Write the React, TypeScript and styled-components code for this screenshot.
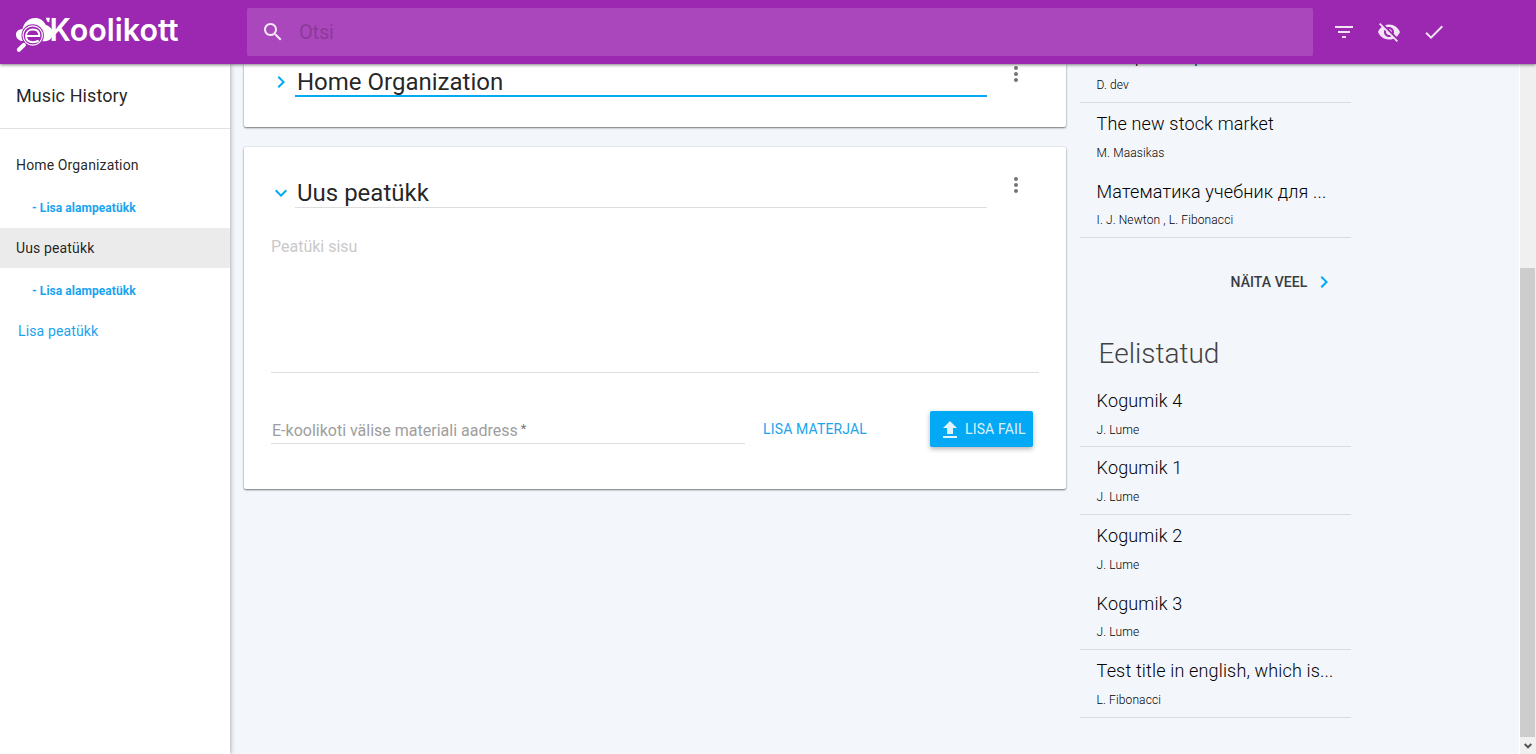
import React from "react";
import styled, { createGlobalStyle } from "styled-components";

const Global = createGlobalStyle`
  *, *::before, *::after { box-sizing: border-box; }
  html, body, #root { height: 100%; }
  body { margin: 0; background: #f3f6fb; font-family: Roboto, "Liberation Sans", sans-serif; color: rgba(0,0,0,.87); overflow: hidden; }
  h1, h2, h3, p { margin: 0; font-weight: 400; }
  button { font: inherit; border: 0; background: none; padding: 0; }
  svg { display: block; flex: none; }
`;

const Page = styled.div`
  height: 754px;
  display: flex;
  flex-direction: column;
`;
const Header = styled.header`
  height: 64px;
  flex: none;
  display: flex;
  align-items: center;
  background: #9c27b0;
  position: relative;
  z-index: 2;
  box-shadow: 0 1px 3px rgba(0,0,0,.5);
`;
const Brand = styled.div`
  width: 247px;
  flex: none;
`;
const SearchBar = styled.label`
  width: 1066px;
  height: 48px;
  display: flex;
  align-items: center;
  padding-left: 13.5px;
  gap: 14.5px;
  border-radius: 2px;
  background: #ab47bc;
`;
const SearchText = styled.span`
  font-size: 20px;
  line-height: 24px;
  letter-spacing: -.2px;
  color: #8b3a9a;
`;
const Actions = styled.div`
  display: flex;
  align-items: center;
  gap: 21.3px;
  padding-left: 18.5px;
`;
const Body = styled.div`
  flex: 1;
  min-height: 0;
  display: flex;
`;
const Sidebar = styled.nav`
  width: 230px;
  flex: none;
  background: #fff;
  box-shadow: 0 0 5px rgba(0,0,0,.4);
  position: relative;
  z-index: 1;
`;
const SidebarTitle = styled.h2`
  height: 65px;
  padding: 0 16px;
  border-bottom: 1px solid #e1e1e1;
  font-size: 18px;
  line-height: 63px;
  letter-spacing: .08px;
  margin-bottom: 16px;
`;
const Chapter = styled.div<{ $active?: boolean }>`
  height: 40px;
  padding: 0 16px;
  font-size: 14px;
  line-height: 40px;
  letter-spacing: .14px;
  background: ${(p) => (p.$active ? "#ebebeb" : "transparent")};
`;
const AddSub = styled.div`
  height: 43px;
  padding-left: 32px;
  font-size: 12px;
  font-weight: 700;
  line-height: 47px;
  letter-spacing: .06px;
  color: #1aa3ee;
`;
const AddChapter = styled.div`
  padding-left: 18px;
  font-size: 14px;
  line-height: 40px;
  letter-spacing: .14px;
  color: #1aa3ee;
`;
const Main = styled.main`
  width: 850px;
  flex: none;
  padding: 0 14px;
`;
const Card = styled.section<{ $height: number; $flat?: boolean }>`
  height: ${(p) => p.$height}px;
  padding: ${(p) => (p.$flat ? "0" : "28px")} 27px 0;
  margin-bottom: 20px;
  border-radius: ${(p) => (p.$flat ? "0 0 2px 2px" : "2px")};
  background: #fff;
  box-shadow: 0 1px 2px rgba(0,0,0,.5), 0 0 2px rgba(0,0,0,.14);
`;
const ChapterHead = styled.div`
  display: flex;
  align-items: flex-start;
`;
const Toggle = styled.div`
  width: 26px;
  margin-left: -2px;
  padding-top: 6px;
`;
const ChapterTitle = styled.h1<{ $focus?: boolean }>`
  width: 692px;
  height: 33px;
  padding: 4px 2px 0;
  font-size: 24px;
  line-height: 28px;
  border-bottom: ${(p) => (p.$focus ? "2px solid #03a9f4" : "1px solid #dedede")};
`;
const Kebab = styled.div`
  margin-top: -2px;
  padding-left: 16.5px;
`;
const Editor = styled.div`
  height: 143px;
  margin-top: 22px;
  padding-top: 6px;
  border-bottom: 1px solid #dedede;
  font-size: 16px;
  line-height: 22px;
  color: #c9c9c9;
`;
const MaterialRow = styled.div`
  display: flex;
  align-items: center;
  margin-top: 38px;
  height: 36px;
`;
const UrlField = styled.div`
  width: 474px;
  height: 30px;
  margin-top: -1px;
  padding: 4px 1px 0;
  border-bottom: 1px solid #dedede;
  font-size: 16px;
  line-height: 26px;
  color: #9e9e9e;
`;
const Star = styled.sup`
  font-size: 13px;
  line-height: 0;
  vertical-align: 3px;
  margin-left: 3px;
  color: #777;
`;
const FlatButton = styled.button`
  margin-left: 18px;
  font-size: 14px;
  line-height: 36px;
  color: #1aa3ee;
  letter-spacing: .14px;
  width: 104px;
  white-space: nowrap;
`;
const RaisedButton = styled.button`
  width: 103px;
  height: 36px;
  margin-left: 63px;
  padding-left: 7.5px;
  display: flex;
  align-items: center;
  gap: 3.5px;
  border-radius: 2px;
  background: #03a9f4;
  color: rgba(255,255,255,.87);
  font-size: 14px;
  letter-spacing: .14px;
  white-space: nowrap;
  box-shadow: 0 2px 5px rgba(0,0,0,.3);

  svg { margin-top: 1px; }
`;
const Aside = styled.aside`
  width: 271px;
  flex: none;
`;
const Item = styled.div<{ $h: number; $line?: boolean; $top: number }>`
  height: ${(p) => p.$h}px;
  padding: ${(p) => p.$top}px 0 0 16.6px;
  border-bottom: ${(p) => (p.$line ? "1px solid #d9dce1" : "0")};
  color: #000;
`;
const ItemTitle = styled.h3`
  font-size: 18px;
  font-weight: 300;
  line-height: 28px;
  letter-spacing: .16px;
  white-space: nowrap;
`;
const ItemAuthor = styled.p<{ $gap?: number }>`
  font-size: 12px;
  font-weight: 300;
  line-height: 16px;
  margin-top: ${(p) => p.$gap ?? 7}px;
  letter-spacing: .12px;
`;
const ScrolledItem = styled.div`
  height: 68px;
  margin-top: -29px;
  padding: 7px 0 0 16.6px;
  border-bottom: 1px solid #d9dce1;
  color: #000;
`;
const More = styled.div`
  height: 90px;
  display: flex;
  align-items: center;
  justify-content: flex-end;
  gap: 4px;
  padding: 0 15.5px 2px 0;
  font-size: 14px;
  font-weight: 500;
  line-height: 18px;
  letter-spacing: .08px;
  color: #3a3c3f;
`;
const AsideHeading = styled.h2`
  height: 52px;
  padding-left: 18.5px;
  font-size: 28px;
  font-weight: 300;
  line-height: 52px;
  color: #424242;
`;
const Spacer = styled.div`
  flex: 1;
`;
const ScrollTrack = styled.div`
  width: 17px;
  border-left: 1px solid #fff;
  background: #f0f0f0;
  display: flex;
  flex-direction: column;
  justify-content: flex-end;
`;
const ScrollThumb = styled.div`
  height: 469px;
  margin-right: 1px;
  background: #cdcdcd;
`;
const ScrollButton = styled.div`
  height: 17px;
  display: flex;
  align-items: center;
  justify-content: center;
`;

const paths = {
  search: "M15.5 14h-.79l-.28-.27C15.41 12.59 16 11.11 16 9.5 16 5.91 13.09 3 9.5 3S3 5.91 3 9.5 5.91 16 9.5 16c1.61 0 3.09-.59 4.23-1.57l.27.28v.79l5 4.99L20.49 19l-4.99-5zm-6 0C7.01 14 5 11.99 5 9.5S7.01 5 9.5 5 14 7.01 14 9.5 11.99 14 9.5 14z",
  filter: "M10 18h4v-2h-4v2zM3 6v2h18V6H3zm3 7h12v-2H6v2z",
  hidden: "M12 7c2.76 0 5 2.24 5 5 0 .65-.13 1.26-.36 1.83l2.92 2.92c1.51-1.26 2.7-2.89 3.43-4.75-1.73-4.39-6-7.5-11-7.5-1.4 0-2.74.25-3.98.7l2.16 2.16C10.74 7.13 11.35 7 12 7zM2 4.27l2.28 2.28.46.46C3.08 8.3 1.78 10.02 1 12c1.73 4.39 6 7.5 11 7.5 1.55 0 3.03-.3 4.38-.84l.42.42L19.73 22 21 20.73 3.27 3 2 4.27zM7.53 9.8l1.55 1.55c-.05.21-.08.43-.08.65 0 1.66 1.34 3 3 3 .22 0 .44-.03.65-.08l1.55 1.55c-.67.33-1.41.53-2.2.53-2.76 0-5-2.24-5-5 0-.79.2-1.53.53-2.2zm4.31-.78l3.15 3.15.02-.16c0-1.66-1.34-3-3-3l-.17.01z",
  check: "M9 16.17L4.83 12l-1.42 1.41L9 19 21 7l-1.41-1.41z",
  right: "M10 6L8.59 7.41 13.17 12l-4.58 4.59L10 18l6-6z",
  down: "M16.59 8.59L12 13.17 7.41 8.59 6 10l6 6 6-6z",
  more: "M12 8c1.1 0 2-.9 2-2s-.9-2-2-2-2 .9-2 2 .9 2 2 2zm0 2c-1.1 0-2 .9-2 2s.9 2 2 2 2-.9 2-2-.9-2-2-2zm0 6c-1.1 0-2 .9-2 2s.9 2 2 2 2-.9 2-2-.9-2-2-2z",
  upload: "M5 10h4v6h6v-6h4l-7-7-7 7zm0 8v2h14v-2H5z",
};

function Icon({ name, color = "rgba(255,255,255,.87)" }: { name: keyof typeof paths; color?: string }) {
  return (
    <svg width="24" height="24" viewBox="0 0 24 24" fill={color}>
      <path d={paths[name]} />
    </svg>
  );
}

function Logo() {
  return (
    <svg width="247" height="64" viewBox="0 0 247 64">
      <path fill="#fff" d="M21 41C17.500 39.800 16 37.500 16 34.800C16 31.300 18.600 29.200 22.400 29.300C24 22 29 18 35.200 18C40 18 43.500 20.600 45.600 24.800C50.300 26.300 52.800 29.600 52.800 33.600C52.800 38 49.500 41.300 45 41.300H42Z" />
      <circle cx="32.700" cy="35.500" r="11.200" fill="#9c27b0" />
      <circle cx="32.700" cy="35.500" r="9.700" fill="none" stroke="#fff" strokeWidth="1.200" />
      <path d="M26 36H39.300C39.300 31.800 37 29.600 32.900 29.600C28.800 29.600 26 32.200 26 36C26 39.900 28.800 42.200 33 42.200C35.300 42.200 37.200 41.700 38.700 40.700" fill="none" stroke="#fff" strokeWidth="2" />
      <path d="M23.800 45L18.900 49.700" stroke="#fff" strokeWidth="4.200" strokeLinecap="round" />
      <path d="M45.800 17.700H49.800L49.200 22.500L47.200 21.600Z" fill="#fff" />
      <text x="49.500" y="41.200" textLength="129" lengthAdjust="spacingAndGlyphs" fill="#fff" fontFamily="Inter, sans-serif" fontWeight="600" fontSize="31">Koolikott</text>
    </svg>
  );
}

const blue = "#03a9f4";

type EntryProps = { title: string; author: string; h: number; line?: boolean; top?: number; gap?: number };

function Entry({ title, author, h, line, top = 7, gap }: EntryProps) {
  return (
    <Item $h={h} $line={line} $top={top}>
      <ItemTitle>{title}</ItemTitle>
      <ItemAuthor $gap={gap}>{author}</ItemAuthor>
    </Item>
  );
}

export default function App() {
  return (
    <Page>
      <Global />
      <Header>
        <Brand><Logo /></Brand>
        <SearchBar>
          <Icon name="search" />
          <SearchText>Otsi</SearchText>
        </SearchBar>
        <Actions>
          <Icon name="filter" />
          <Icon name="hidden" />
          <Icon name="check" />
        </Actions>
      </Header>
      <Body>
        <Sidebar>
          <SidebarTitle>Music History</SidebarTitle>
          <Chapter>Home Organization</Chapter>
          <AddSub>- Lisa alampeatükk</AddSub>
          <Chapter $active>Uus peatükk</Chapter>
          <AddSub>- Lisa alampeatükk</AddSub>
          <AddChapter>Lisa peatükk</AddChapter>
        </Sidebar>
        <Main>
          <Card $height={63} $flat>
            <ChapterHead>
              <Toggle><Icon name="right" color={blue} /></Toggle>
              <ChapterTitle $focus>Home Organization</ChapterTitle>
              <Kebab><Icon name="more" color="#757575" /></Kebab>
            </ChapterHead>
          </Card>
          <Card $height={342}>
            <ChapterHead>
              <Toggle><Icon name="down" color={blue} /></Toggle>
              <ChapterTitle>Uus peatükk</ChapterTitle>
              <Kebab><Icon name="more" color="#757575" /></Kebab>
            </ChapterHead>
            <Editor>Peatüki sisu</Editor>
            <MaterialRow>
              <UrlField>E-koolikoti välise materiali aadress<Star>*</Star></UrlField>
              <FlatButton>LISA MATERJAL</FlatButton>
              <RaisedButton><Icon name="upload" />LISA FAIL</RaisedButton>
            </MaterialRow>
          </Card>
        </Main>
        <Aside>
          <ScrolledItem>
            <ItemTitle>Companion per</ItemTitle>
            <ItemAuthor>D. dev</ItemAuthor>
          </ScrolledItem>
          <Entry title="The new stock market" author="M. Maasikas" h={67} />
          <Entry title="Математика учебник для ..." author="I. J. Newton , L. Fibonacci" h={68} line top={8} gap={6} />
          <More>NÄITA VEEL<Icon name="right" color={blue} /></More>
          <AsideHeading>Eelistatud</AsideHeading>
          <Entry title="Kogumik 4" author="J. Lume" h={67} line />
          <Entry title="Kogumik 1" author="J. Lume" h={68} line />
          <Entry title="Kogumik 2" author="J. Lume" h={68} />
          <Entry title="Kogumik 3" author="J. Lume" h={67} line gap={6} />
          <Entry title="Test title in english, which is..." author="L. Fibonacci" h={68} line />
        </Aside>
        <Spacer />
        <ScrollTrack>
          <ScrollThumb />
          <ScrollButton>
            <svg width="8" height="6" viewBox="0 0 8 6"><path d="M.7 1L4 4.300L7.300 1" fill="none" stroke="#555" strokeWidth="2" /></svg>
          </ScrollButton>
        </ScrollTrack>
      </Body>
    </Page>
  );
}
